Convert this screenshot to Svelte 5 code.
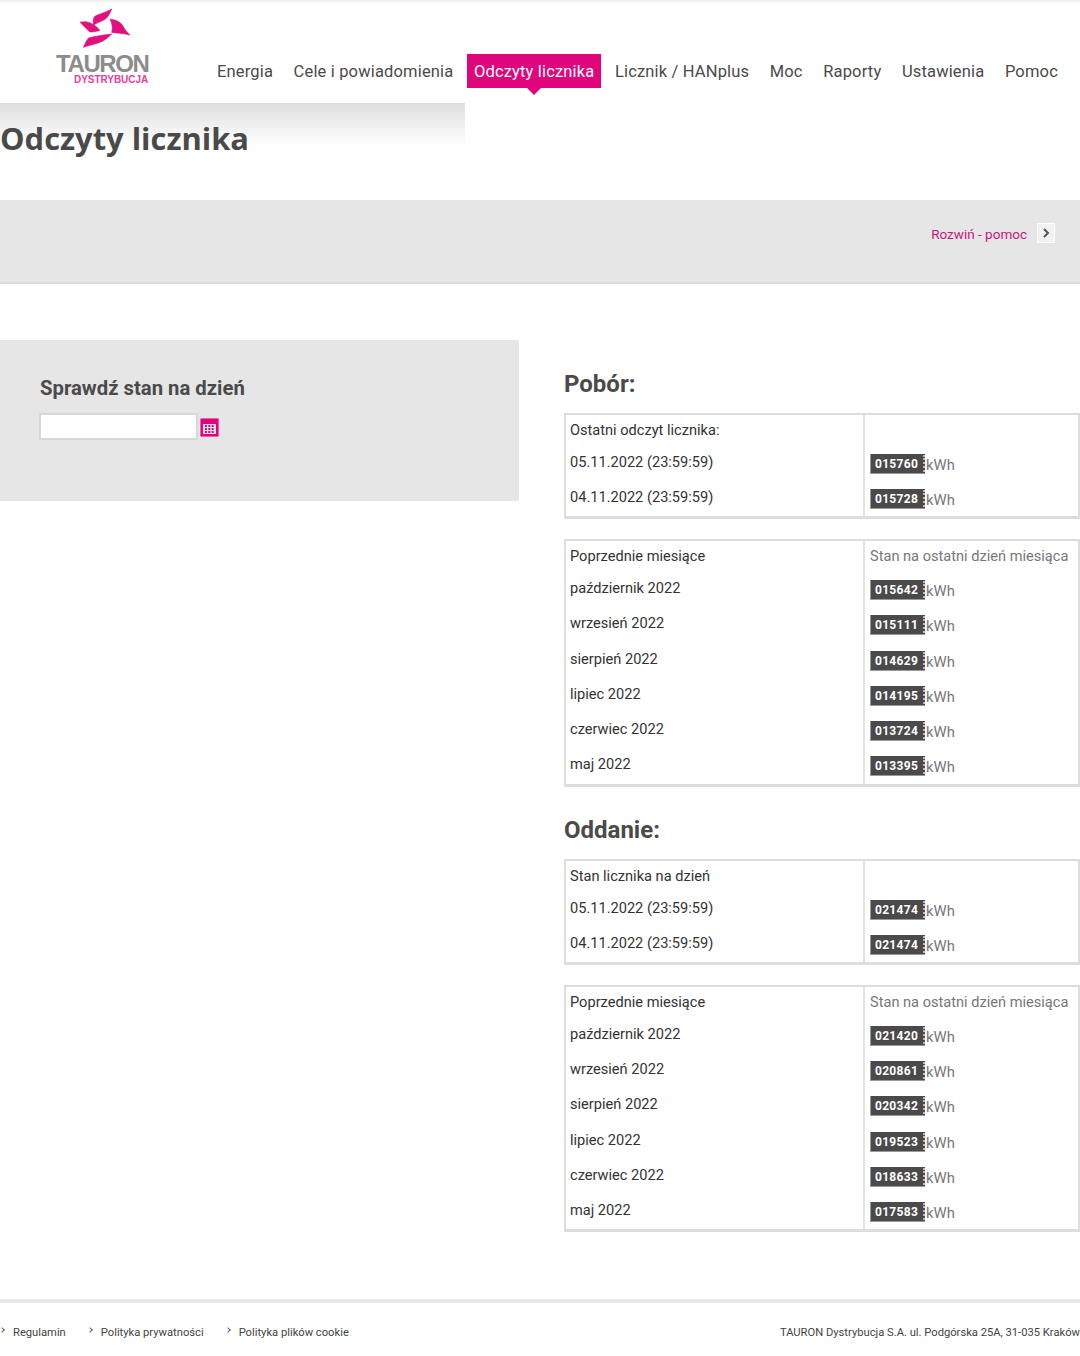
<script>
  const nav = ['Energia','Cele i powiadomienia','Odczyty licznika','Licznik / HANplus','Moc','Raporty','Ustawienia','Pomoc'];
  const months = ['październik 2022','wrzesień 2022','sierpień 2022','lipiec 2022','czerwiec 2022','maj 2022'];
  const sections = [
    { title:'Pobór:', tables:[
      { head:'Ostatni odczyt licznika:', note:'', rows:[['05.11.2022 (23:59:59)','015760'],['04.11.2022 (23:59:59)','015728']] },
      { head:'Poprzednie miesiące', note:'Stan na ostatni dzień miesiąca', rows:['015642','015111','014629','014195','013724','013395'].map((v,i)=>[months[i],v]) }
    ]},
    { title:'Oddanie:', tables:[
      { head:'Stan licznika na dzień', note:'', rows:[['05.11.2022 (23:59:59)','021474'],['04.11.2022 (23:59:59)','021474']] },
      { head:'Poprzednie miesiące', note:'Stan na ostatni dzień miesiąca', rows:['021420','020861','020342','019523','018633','017583'].map((v,i)=>[months[i],v]) }
    ]}
  ];
</script>

<div class="page">
  <header>
    <div class="logo">
      <svg class="mark" viewBox="0 0 70 51" width="70" height="51" aria-hidden="true">
        <g fill="#e0107f" stroke="#e0107f" stroke-width=".6" stroke-linejoin="round">
          <path d="M41.7 5 C35 9 28 10 24.3 12.7 C23 15 23 18 23.5 21.5 C26 19 30 18 34 16 C38 14 40 9 41.7 5Z"/>
          <path d="M10 18.3 C15 17 19 17.5 23 20.5 C26 22 28 24 30 26.5 C25 27.5 23 28 20 28 C16 25 13 21 10 18.3Z"/>
          <path d="M40 15 C45 16 50 17 53 22 C55 26 57 28 60 31 C54 29.5 48 29 41.7 28.5 C43 24 42 19 40 15Z"/>
          <path d="M41.7 30 C33 31 25 32 18.5 34 C16 37 15 40 13.3 43.3 C20 41 27 40 33 37 C36 35 39 33 41.7 30Z"/>
        </g>
      </svg>
      <div class="brand">TAURON</div>
      <div class="sub">DYSTRYBUCJA</div>
    </div>
    <nav>
      {#each nav as item, i}
        <span class="item" class:active={i === 2}>{item}</span>
      {/each}
    </nav>
  </header>

  <div class="title-band"><h1>Odczyty licznika</h1></div>

  <div class="help">
    <span class="help-link">Rozwiń - pomoc</span>
    <span class="help-btn">
      <svg viewBox="0 0 8 10" width="8" height="10"><path d="M2 1 L6 5 L2 9" fill="none" stroke="#555" stroke-width="2"/></svg>
    </span>
  </div>

  <main>
    <aside>
      <h3>Sprawdź stan na dzień</h3>
      <div class="date">
        <input type="text" />
        <svg class="cal" viewBox="0 0 19 19" width="19" height="19">
          <rect width="19" height="19" rx="1.5" fill="#e0057b" stroke="#f5b8d8" stroke-width="1"/>
          <rect x="3" y="6" width="13" height="10" fill="#f7d5e8"/>
          {#each [7,10,13] as y}
            {#each [5,8.3,11.6] as x}
              <rect {x} {y} width="2" height="2" fill="#a8246f"/>
            {/each}
          {/each}
        </svg>
      </div>
    </aside>
    <section class="right">
      {#each sections as s}
        <h2>{s.title}</h2>
        {#each s.tables as t}
          <div class="table">
            <div class="col-l first">{t.head}</div>
            <div class="col-r first note">{t.note}</div>
            {#each t.rows as r}
              <div class="col-l">{r[0]}</div>
              <div class="col-r val"><span class="num">{r[1]}</span><span class="unit">kWh</span></div>
            {/each}
          </div>
        {/each}
      {/each}
    </section>
  </main>

  <footer>
    <div class="links">
      <span>Regulamin</span><span>Polityka prywatności</span><span>Polityka plików cookie</span>
    </div>
    <div class="addr">TAURON Dystrybucja S.A. ul. Podgórska 25A, 31-035 Kraków</div>
  </footer>
</div>

<style>
  :global(body){margin:0;background:#fff;font-family:Roboto,sans-serif;color:#4a4a4a;}
  .page{width:1080px;height:1356px;overflow:hidden;}
  header{height:101px;border-top:2px solid #f0f0f0;display:flex;}
  .logo{width:210px;box-sizing:border-box;padding:2px 0 0 56px;flex:none;}
  .mark{display:block;margin-left:14px;}
  .brand{font:700 24px/18px "Liberation Sans",sans-serif;letter-spacing:-1.4px;color:#8c8c8c;}
  .sub{font:700 10px/10px "Liberation Sans",sans-serif;color:#e6409a;letter-spacing:-.05px;margin:2px 0 0 18px;}
  nav{display:flex;gap:6.55px;align-items:flex-start;padding:52px 0 0 0;}
  .item{font-size:16.5px;line-height:34px;height:34px;padding:1px 7px 0;box-sizing:border-box;white-space:nowrap;position:relative;color:#4a4a4a;letter-spacing:.16px;}
  .active{background:#e0057b;color:#fff;}
  .active::after{content:"";position:absolute;left:50%;bottom:-7px;margin-left:-7px;border:7px solid transparent;border-bottom:0;border-top-color:#e0057b;}
  .title-band{width:465px;height:97px;background:linear-gradient(#dedede,#fff 42px);}
  h1{margin:0;font:700 30.9px/70px "Open Sans",sans-serif;color:#4a4a4a;}
  .help{height:84px;background:#e6e6e6;border-bottom:2px solid #dcdcdc;display:flex;justify-content:flex-end;align-items:flex-start;padding:23px 25px 0 0;gap:10px;box-sizing:border-box;}
  .help-link{color:#c9177f;font-size:13.5px;line-height:16px;margin-top:3px;}
  .help-btn{width:18px;height:20px;background:#f2f2f2;border:1px solid #fff;box-sizing:border-box;display:flex;align-items:center;justify-content:center;}
  main{display:flex;padding-top:56px;gap:45px;height:1015px;box-sizing:border-box;}
  aside{width:519px;height:161px;background:#e6e6e6;box-sizing:border-box;padding:36px 0 0 39px;flex:none;}
  h3{margin:0 0 0 1px;font:700 20.3px/24px Roboto,sans-serif;color:#4a4a4a;}
  .date{display:flex;margin-top:13px;align-items:flex-start;gap:2px;}
  input{width:159px;height:27px;box-sizing:border-box;border:2px solid #d8d8d8;background:#fff;margin:0;padding:0;}
  .cal{margin-top:5px;}
  .right{flex:1;min-width:0;}
  h2{margin:29px 0 14px;font:700 24px/30px Roboto,sans-serif;color:#4a4a4a;}
  .table + h2{margin-top:28.2px;}
  .table{display:grid;grid-template-columns:297px 1fr;border:2px solid #ddd;border-bottom-width:3px;margin-bottom:19.8px;width:516px;box-sizing:border-box;font-size:14.6px;}
  .table > :nth-last-child(-n+2){height:34.3px;}
  .col-l{height:35.2px;padding:5px 0 0 4px;box-sizing:border-box;line-height:20px;color:#333;}
  .col-r{height:35.2px;padding-left:5px;border-left:2px solid #e3e3e3;box-sizing:border-box;}
  .first{height:32px;padding-top:5px;line-height:20px;}
  .note{color:#777;white-space:nowrap;}
  .val{display:flex;align-items:flex-start;padding-top:7px;}
  .num{width:55px;height:20px;box-sizing:border-box;background:#4a4a4a;color:#fff;font:700 12px/20px Roboto,sans-serif;padding-left:4px;letter-spacing:.3px;border-bottom:1px solid #999;border-left:1px solid #999;position:relative;}
  .num::after{content:"";position:absolute;right:0;top:1px;bottom:1px;width:2px;border-right:2px dotted #bbb;}
  .unit{color:#777;margin-left:1px;line-height:22px;font-size:14.8px;}
  footer{border-top:4px solid #e8e8e8;display:flex;justify-content:space-between;font-size:11.2px;padding-top:23px;white-space:nowrap;color:#444;}
  .links{display:flex;gap:22px;}
  .links span{position:relative;padding-left:13px;}
  .links span::before{content:"";position:absolute;left:0;top:2px;width:3px;height:3px;border-top:1.5px solid #666;border-right:1.5px solid #666;transform:rotate(45deg);}
</style>
